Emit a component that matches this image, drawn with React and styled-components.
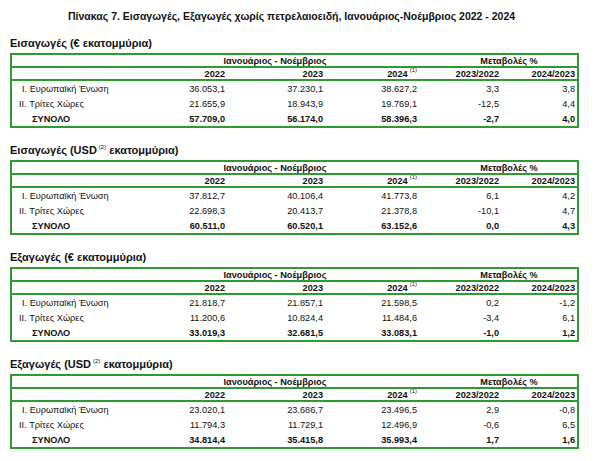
import React from 'react'
import styled, { createGlobalStyle } from 'styled-components'

const GlobalStyle = createGlobalStyle`
  html, body {
    margin: 0;
    padding: 0;
    background: #fff;
  }
  body {
    font-family: "Liberation Sans", Arial, sans-serif;
    color: #111;
  }
`

const GREEN = '#2f9a2f'
const COLS = '128px 87px 98px 94px 82px 76px'

const Page = styled.div`
  width: 600px;
  padding: 9px 0 0 10px;
  box-sizing: border-box;
`

const Title = styled.h1`
  margin: 0 0 0 58px;
  font-size: 10.5px;
  line-height: 14px;
  font-weight: 700;
  white-space: nowrap;
`

const Section = styled.section`
  margin-top: ${({ first }) => (first ? '14px' : '16px')};
`

const SectionTitle = styled.h2`
  margin: 0 0 3px 0;
  font-size: 11px;
  line-height: 13px;
  font-weight: 700;
  white-space: nowrap;
`

const Sup = styled.sup`
  font-size: 6px;
  line-height: 0;
  vertical-align: 0;
  position: relative;
  top: -5px;
  margin-left: 2px;
  font-weight: 400;
`

const Table = styled.div`
  width: 569px;
  box-sizing: border-box;
  border: 2px solid ${GREEN};
  font-size: 9.2px;
`

const Row = styled.div`
  display: grid;
  grid-template-columns: ${COLS};
  align-items: center;
  height: ${({ h }) => h}px;
  border-bottom: ${({ line }) => (line ? `2px solid ${GREEN}` : 'none')};
  font-weight: ${({ bold }) => (bold ? 700 : 400)};
`

const Span = styled.div`
  grid-column: ${({ from, to }) => `${from} / ${to}`};
  text-align: center;
  padding-left: ${({ shift }) => (shift > 0 ? shift : 0)}px;
  padding-right: ${({ shift }) => (shift < 0 ? -shift : 0)}px;
  font-weight: 700;
`

const Label = styled.div`
  padding-left: ${({ indent }) => indent}px;
  white-space: nowrap;
`

const Num = styled.div`
  text-align: right;
  padding-right: 2px;
  white-space: nowrap;
`

const tables = [
  {
    title: 'Εισαγωγές (€ εκατομμύρια)',
    rows: [
      ['36.053,1', '37.230,1', '38.627,2', '3,3', '3,8'],
      ['21.655,9', '18.943,9', '19.769,1', '-12,5', '4,4'],
      ['57.709,0', '56.174,0', '58.396,3', '-2,7', '4,0'],
    ],
  },
  {
    title: 'Εισαγωγές (USD',
    usd: true,
    rows: [
      ['37.812,7', '40.106,4', '41.773,8', '6,1', '4,2'],
      ['22.698,3', '20.413,7', '21.378,8', '-10,1', '4,7'],
      ['60.511,0', '60.520,1', '63.152,6', '0,0', '4,3'],
    ],
  },
  {
    title: 'Εξαγωγές (€ εκατομμύρια)',
    rows: [
      ['21.818,7', '21.857,1', '21.598,5', '0,2', '-1,2'],
      ['11.200,6', '10.824,4', '11.484,6', '-3,4', '6,1'],
      ['33.019,3', '32.681,5', '33.083,1', '-1,0', '1,2'],
    ],
  },
  {
    title: 'Εξαγωγές (USD',
    usd: true,
    rows: [
      ['23.020,1', '23.686,7', '23.496,5', '2,9', '-0,8'],
      ['11.794,3', '11.729,1', '12.496,9', '-0,6', '6,5'],
      ['34.814,4', '35.415,8', '35.993,4', '1,7', '1,6'],
    ],
  },
]

const labels = [
  { text: 'I. Ευρωπαϊκή Ένωση', indent: 10 },
  { text: 'II. Τρίτες Χώρες', indent: 7 },
  { text: 'ΣΥΝΟΛΟ', indent: 20, bold: true },
]

const DataTable = ({ rows }) => (
  <Table>
    <Row h={11} line>
      <Span from={2} to={5} shift={-9}>Ιανουάριος - Νοέμβριος</Span>
      <Span from={5} to={7} shift={22}>Μεταβολές %</Span>
    </Row>
    <Row h={11} line bold>
      <div />
      <Num>2022</Num>
      <Num>2023</Num>
      <Num>2024<Sup>(1)</Sup></Num>
      <Num>2023/2022</Num>
      <Num>2024/2023</Num>
    </Row>
    {rows.map((r, i) => (
      <Row key={i} h={15} bold={labels[i].bold}>
        <Label indent={labels[i].indent}>{labels[i].text}</Label>
        {r.map((v, j) => (
          <Num key={j}>{v}</Num>
        ))}
      </Row>
    ))}
  </Table>
)

export default function App() {
  return (
    <Page>
      <GlobalStyle />
      <Title>Πίνακας 7. Εισαγωγές, Εξαγωγές χωρίς πετρελαιοειδή, Ιανουάριος-Νοέμβριος 2022 - 2024</Title>
      {tables.map((t, i) => (
        <Section key={i} first={i === 0}>
          <SectionTitle>
            {t.usd ? (
              <>
                {t.title}
                <Sup>(2)</Sup> εκατομμύρια)
              </>
            ) : (
              t.title
            )}
          </SectionTitle>
          <DataTable rows={t.rows} />
        </Section>
      ))}
    </Page>
  )
}
